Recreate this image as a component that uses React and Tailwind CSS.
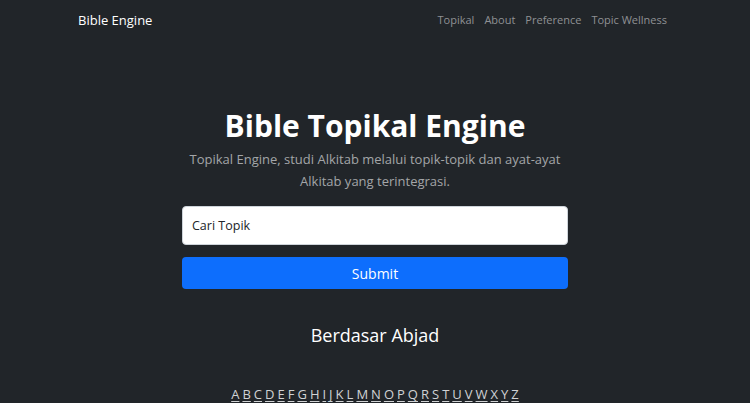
import React from 'react';

const letters = 'ABCDEFGHIJKLMNOPQRSTUVWXYZ'.split('');

const App = () => {
  const links = ['Topikal', 'About', 'Preference', 'Topic Wellness'];

  return (
    <div className="min-h-[403px] bg-[#212529] text-[#dee2e6] font-['Open_Sans',sans-serif]">
      <nav className="py-2">
        <div className="ml-[78px] flex w-[589px] items-center justify-between">
          <a className="text-[13px] text-white leading-[24px]">Bible Engine</a>
          <div className="flex gap-[10px] text-[11px] text-[#8f9194]">
            {links.map((l) => (
              <a key={l}>{l}</a>
            ))}
          </div>
        </div>
      </nav>

      <main className="mx-auto mt-[66px] flex w-[386px] flex-col items-center">
        <h1 className="text-[30px] font-bold leading-[40px] text-white">Bible Topikal Engine</h1>
        <p className="mt-[2px] w-[420px] text-center text-[13px] leading-[22px] text-[#a3a5a8]">
          Topikal Engine, studi Alkitab melalui topik-topik dan ayat-ayat<br />Alkitab yang terintegrasi.
        </p>

        <form className="mt-[14px] flex w-full flex-col gap-[12px]" onSubmit={(e) => e.preventDefault()}>
          <input
            className="h-[39px] w-full rounded-[4px] border border-[#ced4da] bg-white px-[9px] text-[12.5px] text-[#212529] placeholder:text-[#212529] outline-none"
            placeholder="Cari Topik"
          />
          <button className="h-[32px] w-full rounded-[4px] bg-[#0d6efd] text-[14px] text-white">Submit</button>
        </form>

        <h2 className="mt-[32px] text-[18px] leading-[28px] text-white">Berdasar Abjad</h2>

        <div className="mt-[36px] flex gap-[3px] text-[13px] text-[#d0d2d4]">
          {letters.map((c) => (
            <a key={c} className="underline underline-offset-2">{c}</a>
          ))}
        </div>
      </main>
    </div>
  );
};

export default App;
